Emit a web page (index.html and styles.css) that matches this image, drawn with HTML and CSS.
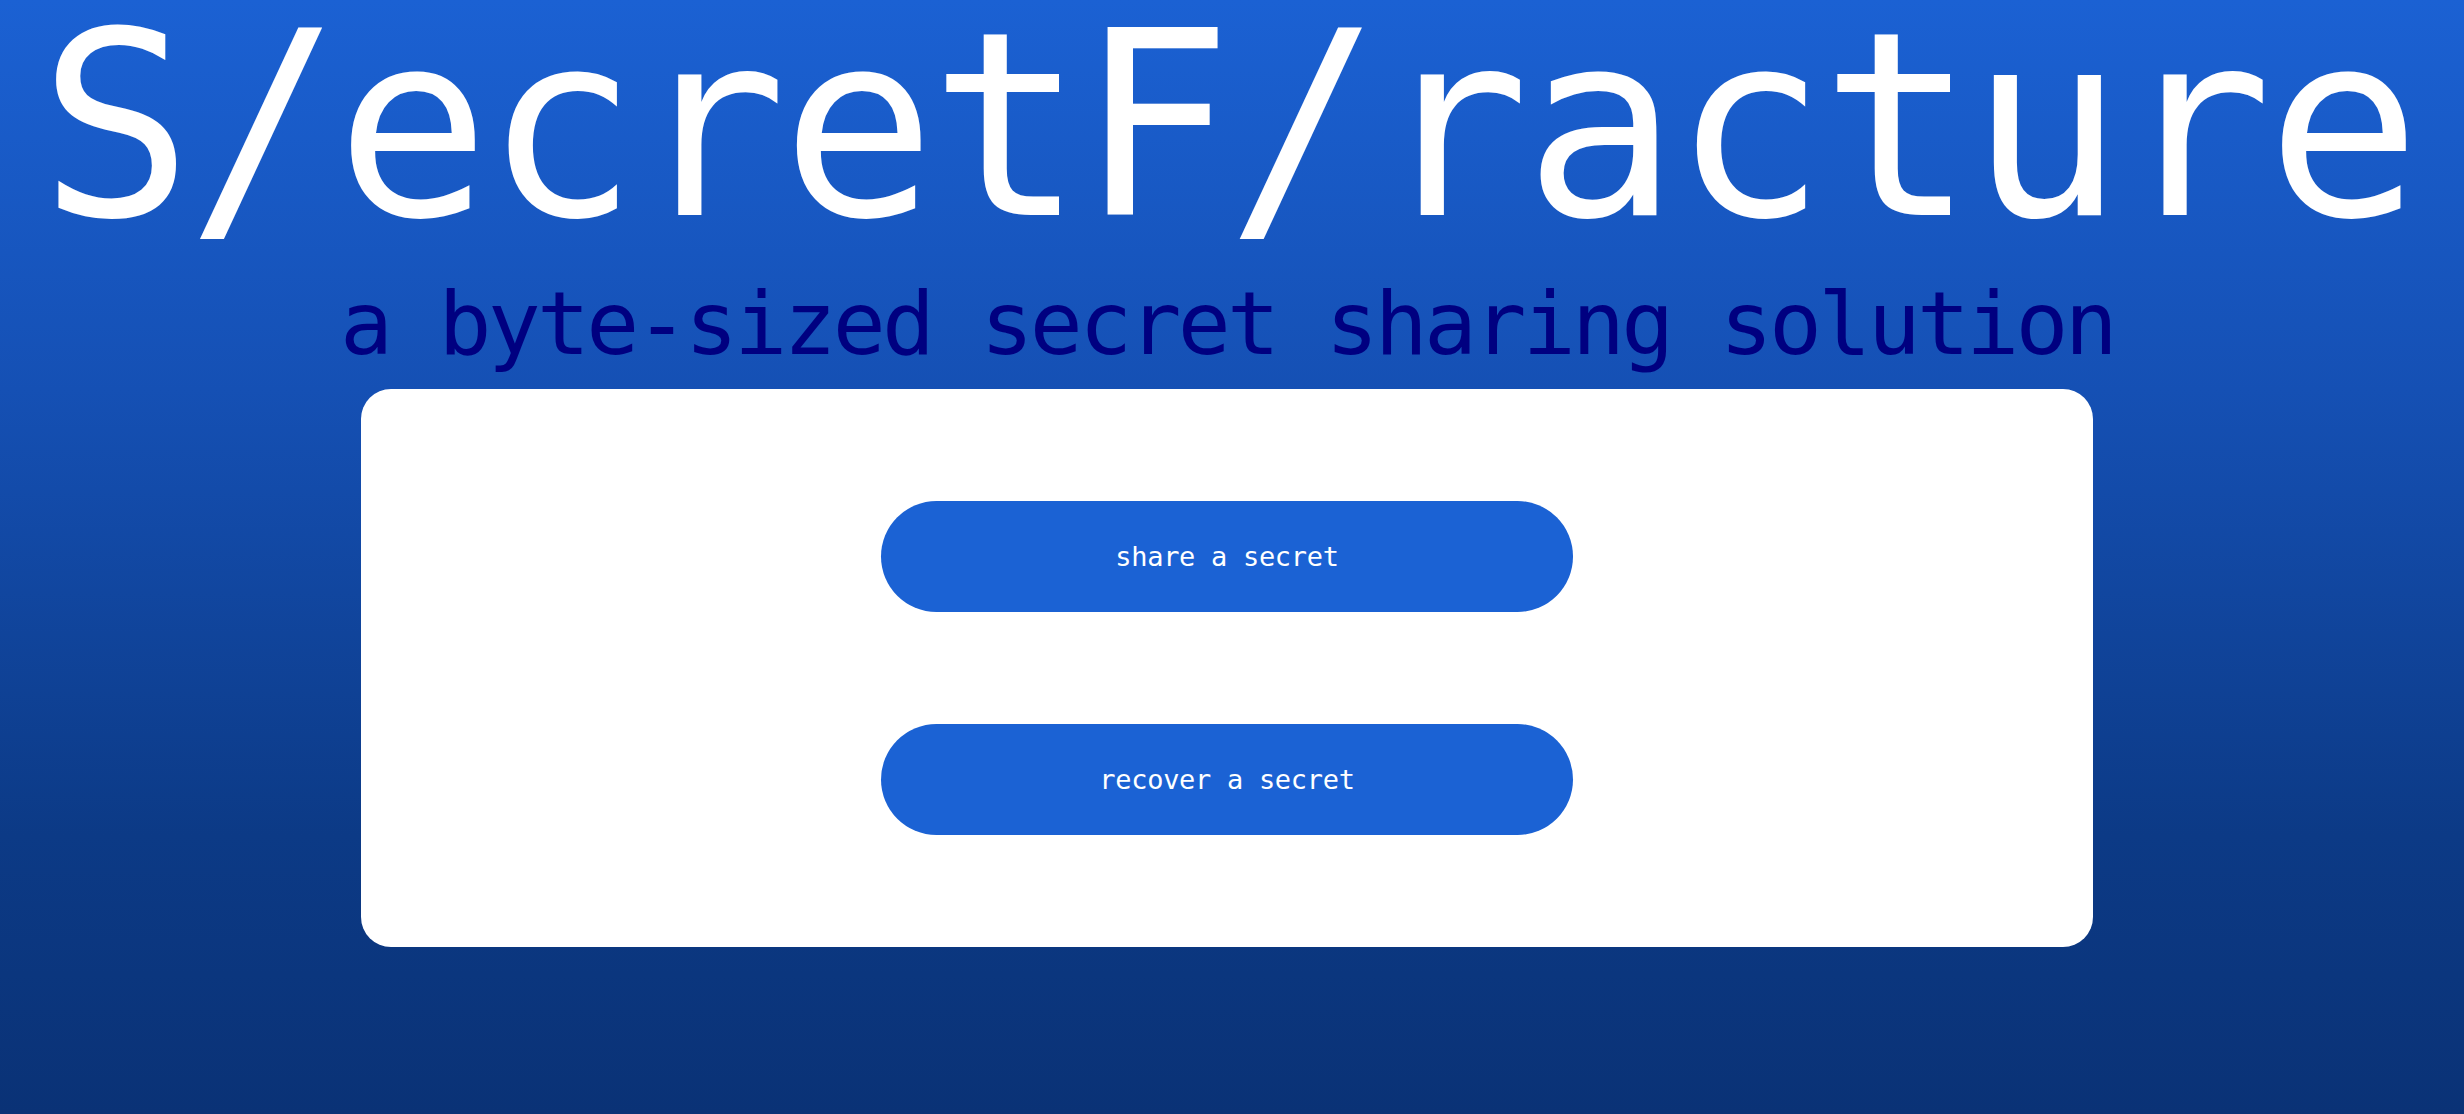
FILE: index.html
```html
<!DOCTYPE html>
<html lang="en">
<head>
<meta charset="utf-8">
<title>S/ecretF/racture</title>
<link rel="stylesheet" href="styles.css">
</head>
<body>
<main class="page">
  <h1 class="title">S/ecretF/racture</h1>
  <p class="tagline">a byte-sized secret sharing solution</p>
  <section class="card">
    <button class="action" type="button">share a secret</button>
    <button class="action" type="button">recover a secret</button>
  </section>
</main>
</body>
</html>
```
FILE: styles.css
```css
html, body {
  margin: 0;
  padding: 0;
}
body {
  min-height: 100vh;
  background: linear-gradient(to bottom, #1b61d3 0%, #1550b4 35%, #0c3a86 75%, #0a3276 100%);
  font-family: "DejaVu Sans Mono", "Liberation Mono", monospace;
  overflow: hidden;
}
.page {
  display: flex;
  flex-direction: column;
  align-items: center;
  padding-right: 10px;
}
.title {
  margin: 0;
  font-size: 256px;
  line-height: 252px;
  font-weight: 400;
  letter-spacing: -5.6px;
  color: #ffffff;
  white-space: nowrap;
}
.tagline {
  margin: 28px 0 0;
  font-size: 88px;
  line-height: 88px;
  letter-spacing: -3.7px;
  color: #000080;
  white-space: nowrap;
}
.card {
  margin-top: 21px;
  width: 1732px;
  height: 558px;
  box-sizing: border-box;
  background: #ffffff;
  border-radius: 30px;
  display: flex;
  flex-direction: column;
  align-items: center;
  justify-content: center;
  gap: 112px;
}
.action {
  width: 692px;
  height: 111px;
  border: none;
  border-radius: 56px;
  background: #1b62d4;
  color: #ffffff;
  font-family: "DejaVu Sans Mono", "Liberation Mono", monospace;
  font-size: 27px;
  letter-spacing: -0.3px;
  cursor: pointer;
}
```
